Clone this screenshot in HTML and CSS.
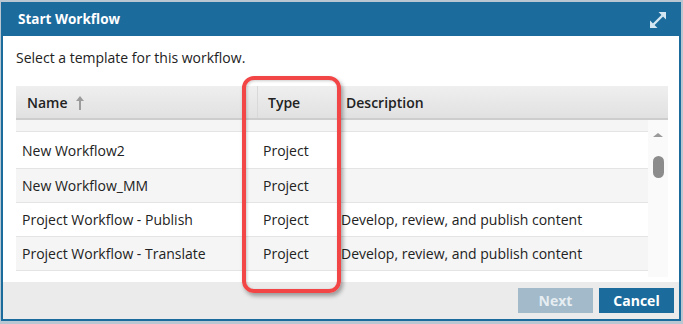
FILE: index.html
```html
<!DOCTYPE html>
<html lang="en">
<head>
    <meta charset="UTF-8">
    <meta name="viewport" content="width=device-width, initial-scale=1.0">
    <title>Start Workflow</title>
    <link rel="stylesheet" href="styles.css">
</head>
<body>
    <div class="dialog">
        <div class="dialog-header">
            <span class="dialog-title">Start Workflow</span>
            <svg class="expand-icon" width="16" height="16" viewBox="0 0 16 16">
                <line x1="3.5" y1="12.5" x2="12.5" y2="3.5" stroke="#d4e6f2" stroke-width="2.4"/>
                <polygon points="16,0 16,7.5 8.5,0" fill="#d4e6f2"/>
                <polygon points="0,16 0,8.5 7.5,16" fill="#d4e6f2"/>
            </svg>
        </div>

        <div class="dialog-body">
            <p class="intro">Select a template for this workflow.</p>

            <div class="grid">
                <div class="grid-head">
                    <div class="head-cell name-col">Name
                        <svg class="sort-icon" width="8" height="14" viewBox="0 0 8 14">
                            <line x1="4" y1="3" x2="4" y2="14" stroke="#9c9c9c" stroke-width="2"/>
                            <polygon points="0,5 4,0 8,5" fill="#9c9c9c"/>
                        </svg>
                    </div>
                    <div class="head-cell type-col">Type</div>
                    <div class="head-cell desc-col">Description</div>
                </div>

                <div class="grid-scroll">
                    <div class="rows">
                        <div class="row alt">
                            <div class="cell"></div><div class="cell"></div><div class="cell"></div>
                        </div>
                        <div class="row tall">
                            <div class="cell">New Workflow2</div><div class="cell">Project</div><div class="cell"></div>
                        </div>
                        <div class="row alt">
                            <div class="cell">New Workflow_MM</div><div class="cell">Project</div><div class="cell"></div>
                        </div>
                        <div class="row">
                            <div class="cell">Project Workflow - Publish</div><div class="cell">Project</div><div class="cell">Develop, review, and publish content</div>
                        </div>
                        <div class="row alt">
                            <div class="cell">Project Workflow - Translate</div><div class="cell">Project</div><div class="cell">Develop, review, and publish content</div>
                        </div>
                    </div>
                    <div class="scrollbar">
                        <div class="scroll-up"></div>
                        <div class="scroll-thumb"></div>
                    </div>
                </div>
            </div>
        </div>

        <div class="dialog-footer">
            <button class="btn btn-disabled">Next</button>
            <button class="btn">Cancel</button>
        </div>
    </div>

    <div class="highlight"></div>
</body>
</html>
```

FILE: styles.css
```css
body {
    margin: 0;
    font-family: "Open Sans", "Liberation Sans", sans-serif;
    font-size: 14px;
    color: #222;
    background-color: #b9c7d2;
    height: 324px;
    overflow: hidden;
}
.dialog {
    box-sizing: border-box;
    width: 680px;
    margin: 2px 0 0 1px;
    border: 2px solid #1b6b9d;
    border-top: none;
    background: white;
}
.dialog-header {
    height: 34px;
    background: #1b6b9d;
    display: flex;
    align-items: center;
    justify-content: space-between;
    padding: 0 13px 0 15px;
}
.dialog-title {
    color: white;
    font-weight: bold;
    font-size: 13.5px;
}
.expand-icon {
    margin-top: 1px;
}
.dialog-body {
    padding: 12px 11px 5px 13px;
}
.intro {
    margin: 0 0 18px;
    line-height: 20px;
}
.grid-head {
    display: grid;
    grid-template-columns: 241px 80px 1fr;
    height: 32px;
    background: linear-gradient(#efefef, #e1e1e1);
    border-bottom: 2px solid #cdcdcd;
}
.head-cell {
    display: flex;
    align-items: center;
    gap: 8px;
    font-weight: 600;
}
.name-col {
    padding-left: 11px;
}
.type-col {
    padding-left: 10px;
    border-left: 1px solid #d9d9d9;
}
.desc-col {
    padding-left: 8px;
    border-left: 1px solid #d9d9d9;
}
.sort-icon {
    margin-top: 1px;
}
.grid-scroll {
    display: flex;
    height: 157px;
    overflow: hidden;
}
.rows {
    flex: 1;
    margin-top: -22px;
}
.row {
    display: grid;
    grid-template-columns: 241px 80px 1fr;
    height: 33px;
    align-items: center;
    border-bottom: 1px solid #e4e4e4;
    background: white;
}
.row.tall {
    height: 36px;
}
.row.alt {
    background: #f5f5f5;
}
.cell {
    padding-left: 6px;
    white-space: nowrap;
}
.cell:last-child {
    padding-left: 4px;
}
.scrollbar {
    width: 20px;
    background: #fafafa;
    display: flex;
    flex-direction: column;
    align-items: center;
    padding-top: 13px;
}
.scroll-up {
    width: 0;
    height: 0;
    border-left: 5px solid transparent;
    border-right: 5px solid transparent;
    border-bottom: 4px solid #9a9a9a;
}
.scroll-thumb {
    margin-top: 19px;
    width: 11px;
    height: 22px;
    border-radius: 6px;
    background: #8c8c8c;
}
.dialog-footer {
    height: 37px;
    box-sizing: border-box;
    background: #ebebeb;
    display: flex;
    justify-content: flex-end;
    gap: 6px;
    padding: 6px 5px 0 0;
}
.btn {
    width: 75px;
    height: 25px;
    border: none;
    background: #1b6b9d;
    color: white;
    font-family: "Open Sans", "Liberation Sans", sans-serif;
    font-size: 14px;
    font-weight: bold;
    padding: 0;
}
.btn-disabled {
    background: #a2bac9;
    color: #e6edf2;
}
.highlight {
    position: absolute;
    left: 242px;
    top: 76px;
    width: 99px;
    height: 217px;
    box-sizing: border-box;
    border: 4px solid #f24646;
    border-radius: 12px;
    box-shadow: 2px 3px 4px rgba(0, 0, 0, 0.35), inset 1px 1px 3px rgba(0, 0, 0, 0.2);
}
```
